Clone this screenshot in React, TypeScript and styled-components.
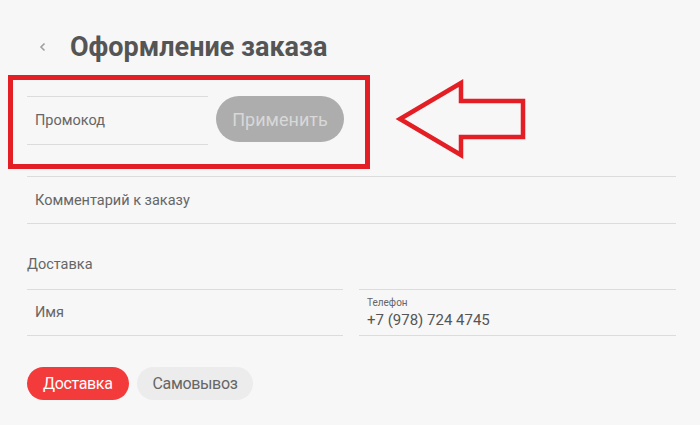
import React from "react";
import styled, { createGlobalStyle } from "styled-components";

const Global = createGlobalStyle`
  html, body { margin: 0; padding: 0; background: #f7f7f7; }
  body { font-family: Roboto, "Noto Sans", Arial, sans-serif; color: #555; }
  #root { min-height: 425px; }
`;

const Page = styled.div`
  position: relative;
  width: 700px;
  height: 425px;
  box-sizing: border-box;
  padding: 27px 24px 0 27px;
  background: #f7f7f7;
  overflow: hidden;
`;

const Header = styled.div`
  display: flex;
  align-items: center;
  height: 40px;
`;

const Back = styled.span`
  display: flex;
  align-items: center;
  margin-left: 12px;
  width: 31px;
  color: #9a9a9a;
`;

const Title = styled.h1`
  margin: 0;
  font-size: 27px;
  line-height: 40px;
  font-weight: 700;
  color: #555;
  letter-spacing: 0;
`;

const Highlight = styled.div`
  margin: 8px 0 0 -19px;
  width: 362px;
  height: 94px;
  box-sizing: border-box;
  border: 5px solid #e31e24;
  padding: 16px 0 0 14px;
  display: flex;
  align-items: flex-start;
  gap: 8px;
`;

const Field = styled.div<{ $w: number; $h?: number }>`
  width: ${(p) => p.$w}px;
  height: ${(p) => p.$h ?? 48}px;
  box-sizing: border-box;
  border-top: 1px solid #dcdcdc;
  border-bottom: 1px solid #dcdcdc;
  padding: 0 8px;
  display: flex;
  flex-direction: column;
  justify-content: center;
`;

const Placeholder = styled.span`
  font-size: 14.5px;
  color: #666;
`;

const ApplyButton = styled.button`
  width: 128px;
  height: 46px;
  border: none;
  border-radius: 23px;
  background: #adadad;
  color: #d8d8d8;
  font-family: inherit;
  font-size: 18px;
  padding: 0;
`;

const CommentField = styled(Field)`
  margin-top: 7px;
`;

const SectionLabel = styled.div`
  margin-top: 31px;
  font-size: 14.5px;
  line-height: 20px;
  color: #666;
`;

const Row = styled.div`
  margin-top: 14px;
  display: flex;
  gap: 16px;
`;

const SmallLabel = styled.span`
  font-size: 10px;
  line-height: 12px;
  color: #666;
  margin-top: 2px;
`;

const Value = styled.span`
  font-size: 15px;
  line-height: 22px;
  color: #555;
`;

const Toggles = styled.div`
  margin-top: 31px;
  display: flex;
  gap: 8px;
`;

const Toggle = styled.button<{ $active?: boolean }>`
  height: 33px;
  padding: 0 16px;
  border: none;
  border-radius: 17px;
  background: ${(p) => (p.$active ? "#f43b3b" : "#ececec")};
  color: ${(p) => (p.$active ? "#fff" : "#666")};
  font-family: inherit;
  font-size: 16px;
  letter-spacing: -0.35px;
`;

const Arrow = styled.svg`
  position: absolute;
  left: 395px;
  top: 78px;
`;

export default function App() {
  return (
    <>
      <Global />
      <Page>
        <Header>
          <Back>
            <svg width="8" height="10" viewBox="0 0 8 10">
              <path d="M5.5 1.5 L2 5 L5.5 8.5" fill="none" stroke="#a0a0a0" strokeWidth="1.6" />
            </svg>
          </Back>
          <Title>Оформление заказа</Title>
        </Header>
        <Highlight>
          <Field $w={181} $h={49}>
            <Placeholder>Промокод</Placeholder>
          </Field>
          <ApplyButton>Применить</ApplyButton>
        </Highlight>
        <CommentField $w={649}>
          <Placeholder>Комментарий к заказу</Placeholder>
        </CommentField>
        <SectionLabel>Доставка</SectionLabel>
        <Row>
          <Field $w={316} $h={47}>
            <Placeholder>Имя</Placeholder>
          </Field>
          <Field $w={317} $h={47}>
            <SmallLabel>Телефон</SmallLabel>
            <Value>+7 (978) 724 4745</Value>
          </Field>
        </Row>
        <Toggles>
          <Toggle $active>Доставка</Toggle>
          <Toggle>Самовывоз</Toggle>
        </Toggles>
        <Arrow width="135" height="82" viewBox="0 0 135 82">
          <polygon
            points="5,41 66,5 66,23 128,23 128,59 66,59 66,77"
            fill="none"
            stroke="#e31e24"
            strokeWidth="4.5"
            strokeLinejoin="miter"
          />
        </Arrow>
      </Page>
    </>
  );
}
